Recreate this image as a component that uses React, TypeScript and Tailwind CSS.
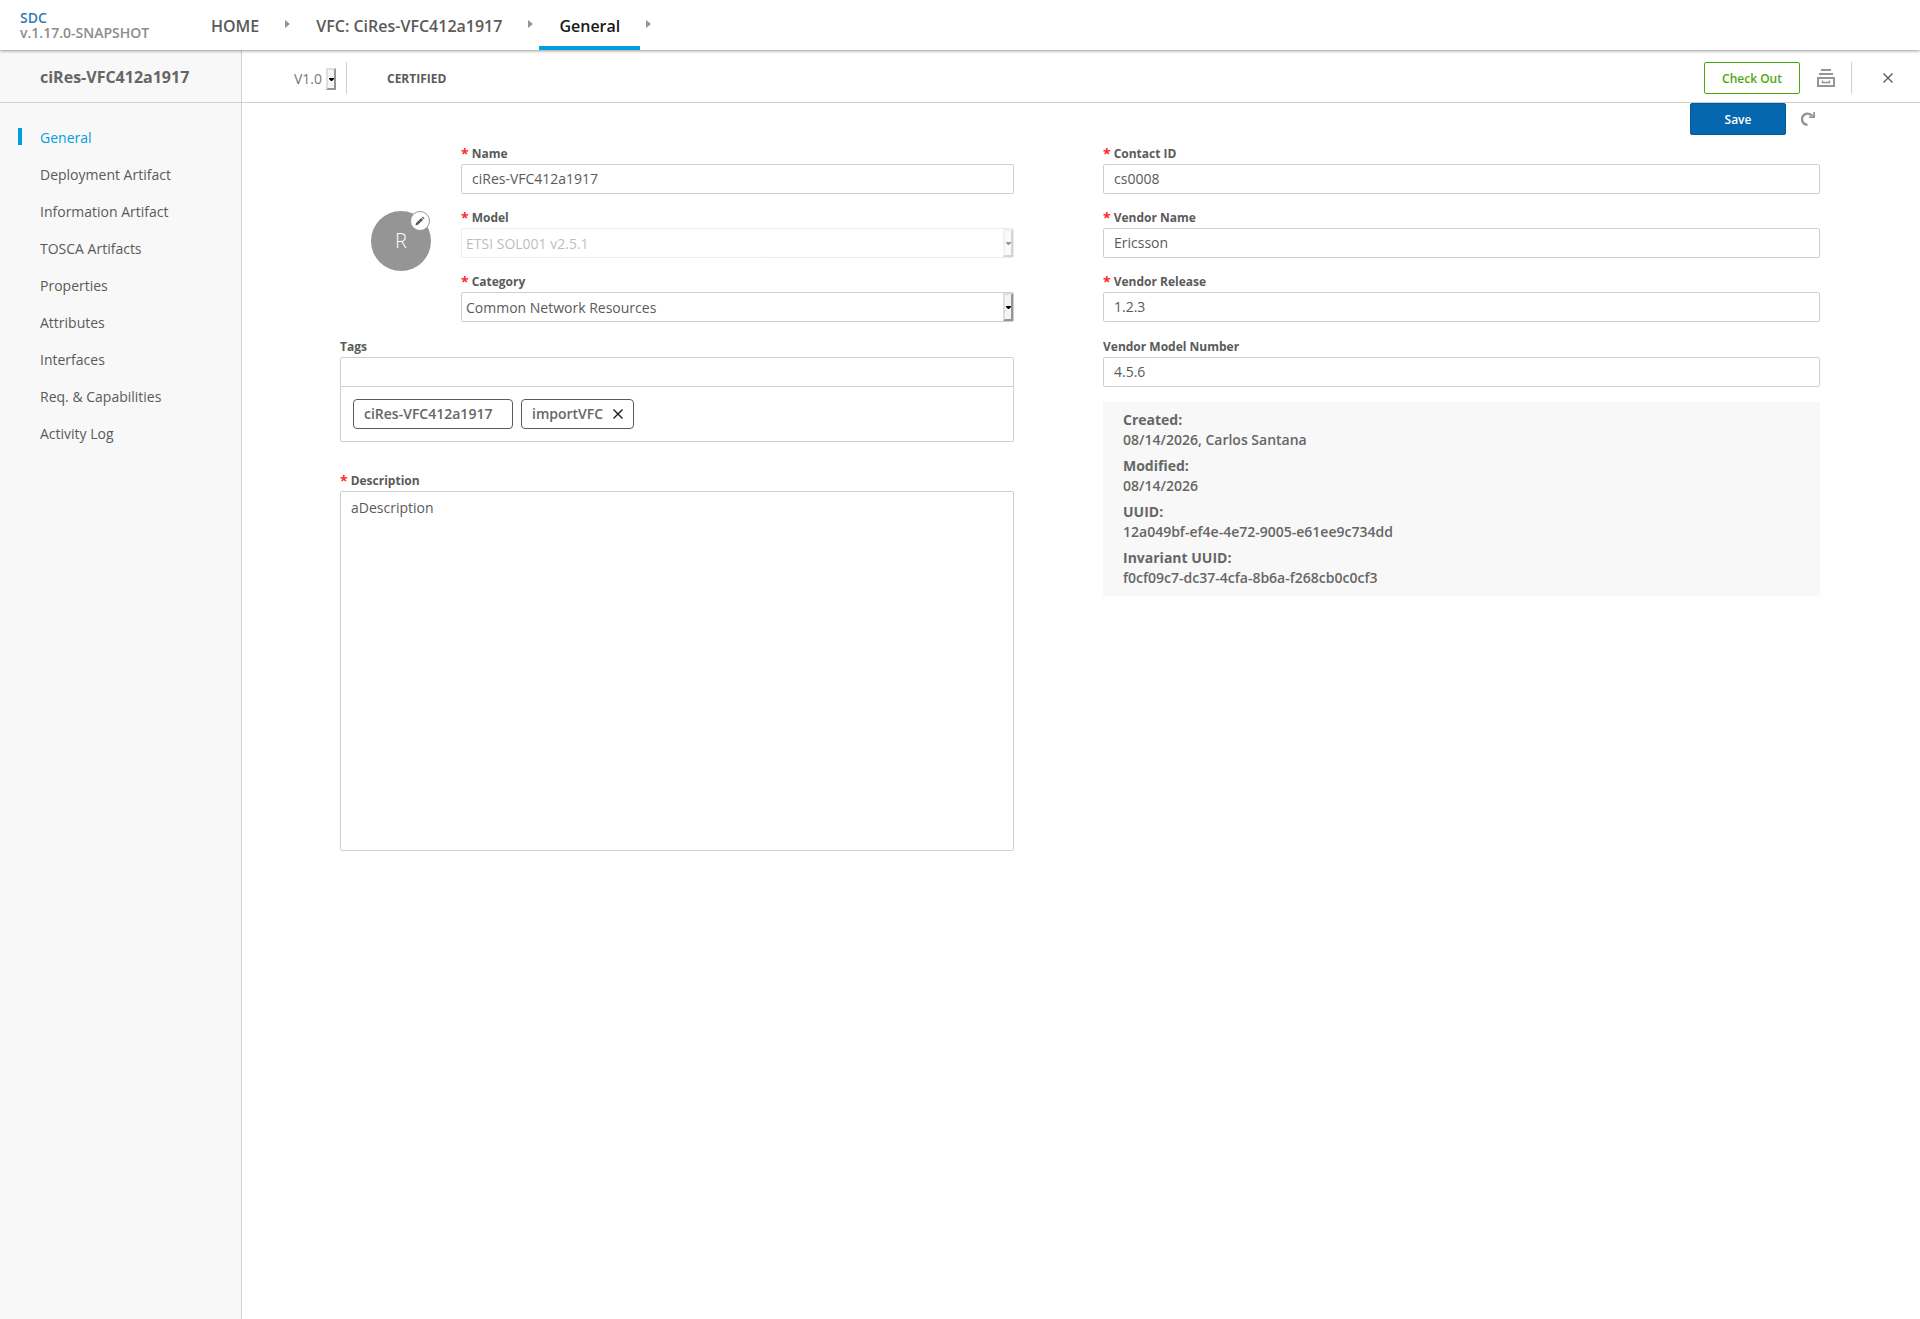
import { ReactNode } from 'react';

const menuItems = [
  'General',
  'Deployment Artifact',
  'Information Artifact',
  'TOSCA Artifacts',
  'Properties',
  'Attributes',
  'Interfaces',
  'Req. & Capabilities',
  'Activity Log',
];

const vendorFields = [
  { id: 'contact', label: 'Contact ID', value: 'cs0008', required: true },
  { id: 'vendor-name', label: 'Vendor Name', value: 'Ericsson', required: true },
  { id: 'vendor-release', label: 'Vendor Release', value: '1.2.3', required: true },
  { id: 'vendor-model', label: 'Vendor Model Number', value: '4.5.6', required: false },
];

const details = [
  { label: 'Created:', value: '08/14/2026, Carlos Santana' },
  { label: 'Modified:', value: '08/14/2026' },
  { label: 'UUID:', value: '12a049bf-ef4e-4e72-9005-e61ee9c734dd' },
  { label: 'Invariant UUID:', value: 'f0cf09c7-dc37-4cfa-8b6a-f268cb0c0cf3' },
];

const inputClass =
  'block h-[30px] w-full rounded-xs border border-[#cfcfcf] bg-white px-2.5 pb-0.5 text-sm text-[#5a5a5a] outline-none';

const Crumb = ({ children }: { children: ReactNode }) => (
  <a href="#" className="flex h-[50px] items-center px-5 pt-0.5 font-semibold text-[#5a5a5a]">
    {children}
  </a>
);

const CrumbArrow = () => (
  <svg className="mx-1.5 mb-0.5 h-2 w-[5px] shrink-0 fill-[#959595]" viewBox="0 0 5 8">
    <path d="M0 0L5 4L0 8Z" />
  </svg>
);

const CloseIcon = ({ className }: { className: string }) => (
  <svg className={className} viewBox="0 0 10 10" fill="none" stroke="currentColor" strokeWidth="1.4">
    <path d="M0.5 0.5L9.5 9.5M9.5 0.5L0.5 9.5" />
  </svg>
);

// Raised drop-down button drawn over the right end of a select
const SelectButton = () => (
  <span
    aria-hidden="true"
    className="pointer-events-none absolute inset-y-px right-px flex w-2.5 items-center justify-center border-2 border-[#dedede] border-r-[#959595] border-b-[#959595] bg-[#f5f5f5]"
  >
    <svg className="h-[3px] w-[5px] shrink-0" viewBox="0 0 5 3">
      <path d="M0 0H5V1L3 3H2L0 1Z" />
    </svg>
  </span>
);

const Field = ({
  id,
  label,
  required,
  children,
}: {
  id: string;
  label: string;
  required?: boolean;
  children: ReactNode;
}) => (
  <div className={required ? '' : 'pt-px'}>
    <label htmlFor={id} className="flex h-[22px] items-center pt-0.5 text-xs font-bold text-[#5a5a5a]">
      {required && <span className="mr-[3px] text-sm text-[#ff2a2a]">*</span>}
      {label}
    </label>
    {children}
  </div>
);

const App = () => {
  return (
    <div className="flex min-h-screen flex-col bg-white font-['Open_Sans','Noto_Sans',sans-serif] text-[#5a5a5a]">
      {/* Top navigation */}
      <header className="relative z-10 flex h-[50px] bg-white shadow-[0_1px_3px_0_rgba(0,0,0,0.4)]">
        <div className="w-[191px] pt-2.5 pl-5 text-sm leading-[15px] font-semibold">
          <a href="#" className="block text-[#337ab7]">SDC</a>
          <div className="text-[#8c8c8c]">v.1.17.0-SNAPSHOT</div>
        </div>
        <nav className="flex items-center" aria-label="Breadcrumb">
          <Crumb>HOME</Crumb>
          <CrumbArrow />
          <Crumb>VFC: CiRes-VFC412a1917</Crumb>
          <CrumbArrow />
          <a
            href="#"
            className="flex h-[50px] items-center border-b-4 border-[#009fdb] px-5 pt-1.5 font-semibold text-[#191919]"
          >
            General
          </a>
          <CrumbArrow />
        </nav>
      </header>

      <div className="flex flex-1">
        {/* Sidebar */}
        <aside className="w-[242px] shrink-0 border-r border-[#cfcfcf] bg-[#f8f8f8]">
          <h1 className="h-[53px] border-b border-[#cfcfcf] pt-[15px] pl-10 leading-6 font-bold text-[#666666]">
            ciRes-VFC412a1917
          </h1>
          <ul className="pt-[15px]">
            {menuItems.map((item, index) => (
              <li key={item} className="flex h-[37px] items-center">
                <span className={`ml-[18px] h-[17px] w-1 ${index === 0 ? 'bg-[#009fdb]' : ''}`}></span>
                <a href="#" className={`ml-[18px] pt-0.5 text-sm ${index === 0 ? 'text-[#009fdb]' : ''}`}>
                  {item}
                </a>
              </li>
            ))}
          </ul>
        </aside>

        <main className="min-w-0 flex-1">
          {/* Version toolbar */}
          <div className="flex h-[53px] items-center border-b border-[#cfcfcf] pt-1 pr-[27px] pl-[52px]">
            <div className="relative mt-0.5 h-6 w-[43px]">
              <select
                aria-label="Version"
                className="block h-full w-full appearance-none bg-transparent text-sm text-[#777777] outline-none"
              >
                <option>V1.0</option>
              </select>
              <SelectButton />
            </div>
            <div className="ml-[9px] h-8 w-px bg-[#cfcfcf]"></div>
            <div className="ml-10 pt-0.5 text-xs font-bold">CERTIFIED</div>

            <div className="ml-auto flex items-center">
              <button className="h-8 w-24 rounded-xs border border-[#4ca90c] pt-0.5 text-xs font-semibold text-[#4ca90c]">
                Check Out
              </button>
              <button className="ml-[17px]" aria-label="Archive">
                <svg className="h-5 w-[18px]" viewBox="0 0 18 20" fill="none" stroke="#959595" strokeWidth="2">
                  <path d="M4 2H14M2 6H16M1 10H17V18H1Z" />
                  <path d="M5.5 12.5V14.5H12.5V12.5" strokeWidth="1.5" />
                </svg>
              </button>
              <div className="ml-4 h-8 w-px bg-[#cfcfcf]"></div>
              <button className="ml-[31px]" aria-label="Close">
                <CloseIcon className="h-2.5 w-2.5" />
              </button>
            </div>
          </div>

          {/* Save bar */}
          <div className="flex items-center justify-end pr-[105px]">
            <button className="h-8 w-24 rounded-xs border border-[#045a97] bg-[#0568ae] pt-0.5 text-xs font-semibold text-white">
              Save
            </button>
            <button className="ml-[15px]" aria-label="Revert">
              <svg className="h-3.5 w-3.5" viewBox="0 0 14 14" fill="none" stroke="#959595" strokeWidth="2.4">
                <path d="M6.5 12.8A5.6 5.6 0 1 1 11.2 4" />
                <path d="M14 0V6H8V4.6L11.8 4.2L12.4 0Z" fill="#959595" stroke="none" />
              </svg>
            </button>
          </div>

          <form className="grid grid-cols-[674fr_717fr] gap-[89px] pt-[7px] pr-[100px] pl-[98px]">
            <div>
              <div className="flex">
                <div className="w-[121px] shrink-0 pt-[69px] pl-[31px]">
                  <div className="relative flex h-[60px] w-[60px] items-center justify-center rounded-full bg-[#959595] text-xl font-light text-white">
                    R
                    <button
                      type="button"
                      aria-label="Edit icon"
                      className="absolute top-0 right-px flex h-5 w-5 items-center justify-center rounded-full border border-[#959595] bg-white"
                    >
                      <svg className="h-2.5 w-2.5" viewBox="0 0 10 10" fill="#5a5a5a">
                        <path d="M7.6 0.4L9.6 2.2L8.7 3.2L6.8 1.3ZM6.2 1.9L8.1 3.8L3 8.8L0.4 9.6L1.1 7Z" />
                      </svg>
                    </button>
                  </div>
                </div>
                <div className="flex flex-1 flex-col gap-3">
                  <Field id="name" label="Name" required>
                    <input id="name" className={inputClass} defaultValue="ciRes-VFC412a1917" />
                  </Field>
                  <Field id="model" label="Model" required>
                    <div className="relative opacity-40">
                      <select
                        id="model"
                        disabled
                        className="block h-[30px] w-full appearance-none rounded-xs border border-[#cfcfcf] pt-0.5 pl-1 text-sm text-[#5a5a5a]"
                      >
                        <option>ETSI SOL001 v2.5.1</option>
                      </select>
                      <SelectButton />
                    </div>
                  </Field>
                  <Field id="category" label="Category" required>
                    <div className="relative">
                      <select
                        id="category"
                        className="block h-[30px] w-full appearance-none rounded-xs border border-[#cfcfcf] pt-0.5 pl-1 text-sm text-[#5a5a5a] outline-none"
                      >
                        <option>Common Network Resources</option>
                      </select>
                      <SelectButton />
                    </div>
                  </Field>
                </div>
              </div>

              <div className="pt-3">
                <Field id="tags" label="Tags">
                  <div className="h-[85px] rounded-xs border border-[#cfcfcf]">
                    <input
                      id="tags"
                      className="block h-[29px] w-full border-b border-[#cfcfcf] px-2.5 text-sm outline-none"
                    />
                    <div className="flex gap-2 px-3 py-3 text-sm font-semibold text-[#666666]">
                      <span className="flex h-[30px] w-40 items-center rounded-sm border border-[#5a5a5a] pl-2.5">
                        ciRes-VFC412a1917
                      </span>
                      <span className="flex h-[30px] items-center rounded-sm border border-[#5a5a5a] px-2.5">
                        importVFC
                        <button type="button" className="ml-2.5 text-[#191919]" aria-label="Remove importVFC">
                          <CloseIcon className="h-2.5 w-2.5" />
                        </button>
                      </span>
                    </div>
                  </div>
                </Field>
              </div>

              <div className="pt-[27px]">
                <Field id="description" label="Description" required>
                  <textarea
                    id="description"
                    className="block h-[360px] w-full resize-none rounded-xs border border-[#cfcfcf] px-2.5 py-1.5 text-sm text-[#5a5a5a] outline-none"
                    defaultValue="aDescription"
                  />
                </Field>
              </div>
            </div>

            <div>
              <div className="flex flex-col gap-3">
                {vendorFields.map((field) => (
                  <Field key={field.id} id={field.id} label={field.label} required={field.required}>
                    <input id={field.id} className={inputClass} defaultValue={field.value} />
                  </Field>
                ))}
              </div>

              <dl className="mt-[15px] flex flex-col gap-1.5 bg-[#f8f8f8] px-5 py-2 text-sm text-[#666666]">
                {details.map((detail) => (
                  <div key={detail.label}>
                    <dt className="font-bold">{detail.label}</dt>
                    <dd className="font-semibold">{detail.value}</dd>
                  </div>
                ))}
              </dl>
            </div>
          </form>
        </main>
      </div>
    </div>
  );
};

export default App;
